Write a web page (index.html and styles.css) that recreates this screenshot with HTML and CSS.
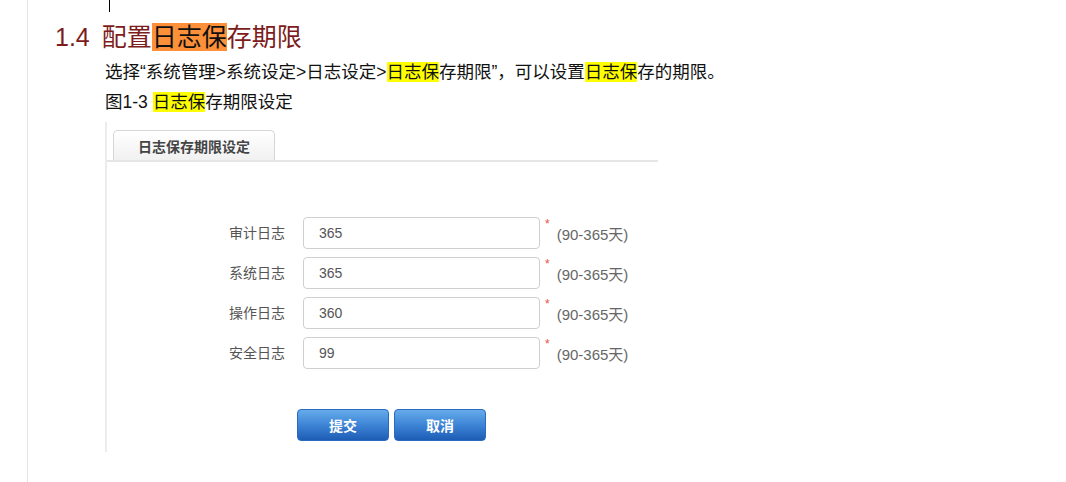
FILE: index.html
```html
<!DOCTYPE html>
<html lang="zh-CN">
<head>
  <meta charset="UTF-8">
  <title>配置日志保存期限</title>
  <link rel="stylesheet" href="styles.css">
</head>
<body>
  <div class="doc">
    <div class="caret"></div>
    <h1 class="section-title"><span class="num">1.4</span>配置<span class="hl-orange">日志保</span>存期限</h1>
    <p class="para">选择“系统管理&gt;系统设定&gt;日志设定&gt;<span class="hl">日志保</span>存期限”，可以设置<span class="hl">日志保</span>存的期限。</p>
    <p class="caption">图1-3 <span class="hl">日志保</span>存期限设定</p>

    <div class="figure">
      <div class="tabs">
        <div class="tab">日志保存期限设定</div>
      </div>
      <div class="form">
        <label class="label">审计日志</label>
        <div class="input">365</div>
        <div class="hint"><span class="req">*</span>(90-365天)</div>

        <label class="label">系统日志</label>
        <div class="input">365</div>
        <div class="hint"><span class="req">*</span>(90-365天)</div>

        <label class="label">操作日志</label>
        <div class="input">360</div>
        <div class="hint"><span class="req">*</span>(90-365天)</div>

        <label class="label">安全日志</label>
        <div class="input">99</div>
        <div class="hint"><span class="req">*</span>(90-365天)</div>
      </div>
      <div class="actions">
        <button class="btn">提交</button>
        <button class="btn">取消</button>
      </div>
    </div>
  </div>
</body>
</html>
```

FILE: styles.css
```css
body {
  margin: 0;
  font-family: "Liberation Sans", "Noto Sans CJK SC", sans-serif;
  color: #111;
  background: #fff;
}
.doc {
  margin-left: 27px;
  border-left: 1px solid #e4e4e4;
  min-height: 100vh;
  box-sizing: border-box;
  overflow: hidden;
}
.caret {
  margin-left: 81px;
  width: 1px;
  height: 12px;
  background: #000;
}
.section-title {
  margin: 10px 0 0 27px;
  font-size: 25px;
  line-height: 30px;
  font-weight: normal;
  color: #7d1c1c;
}
.num {
  margin-right: 12px;
}
.hl-orange {
  background: #fd9038;
  color: #111;
}
.para,
.caption {
  margin: 0 0 0 77px;
  font-size: 17.5px;
  line-height: 30px;
}
.para {
  margin-top: 5px;
}
.hl {
  background: #ffff00;
}
.figure {
  margin: 5px 0 0 77px;
  width: 553px;
  height: 330px;
  border-left: 2px solid #ececec;
  box-sizing: border-box;
}
.tabs {
  padding: 8px 0 0 6px;
  border-bottom: 2px solid #e6e6e6;
  display: flex;
}
.tab {
  width: 162px;
  height: 30px;
  box-sizing: border-box;
  border: 1px solid #d6d6d6;
  border-bottom: none;
  border-radius: 5px 5px 0 0;
  background: linear-gradient(#ffffff, #f1f1f1);
  font-size: 14px;
  font-weight: bold;
  color: #444;
  display: flex;
  align-items: center;
  justify-content: center;
}
.form {
  margin-top: 55px;
  display: grid;
  grid-template-columns: 178px 237px auto;
  column-gap: 18px;
  row-gap: 8px;
  align-items: center;
  font-size: 14px;
}
.label {
  text-align: right;
  color: #555;
  margin-top: -2px;
}
.input {
  height: 32px;
  box-sizing: border-box;
  border: 1px solid #cfcfcf;
  border-radius: 4px;
  padding-left: 15px;
  display: flex;
  align-items: center;
  color: #555;
}
.hint {
  margin-left: -13px;
  color: #666;
  font-size: 15px;
  display: flex;
  align-items: center;
  margin-top: 0;
}
.req {
  color: #ef4b4b;
  font-size: 12px;
  margin-right: 7px;
  align-self: flex-start;
  margin-top: -6px;
}
.actions {
  margin: 40px 0 0 190px;
  display: flex;
  gap: 5px;
}
.btn {
  width: 92px;
  height: 32px;
  border: 1px solid #2a6bbf;
  border-radius: 4px;
  background: linear-gradient(#66abea, #3d84d6 50%, #1e5db5);
  color: #fff;
  font-family: inherit;
  font-size: 14px;
  font-weight: bold;
  padding: 0;
}
```
